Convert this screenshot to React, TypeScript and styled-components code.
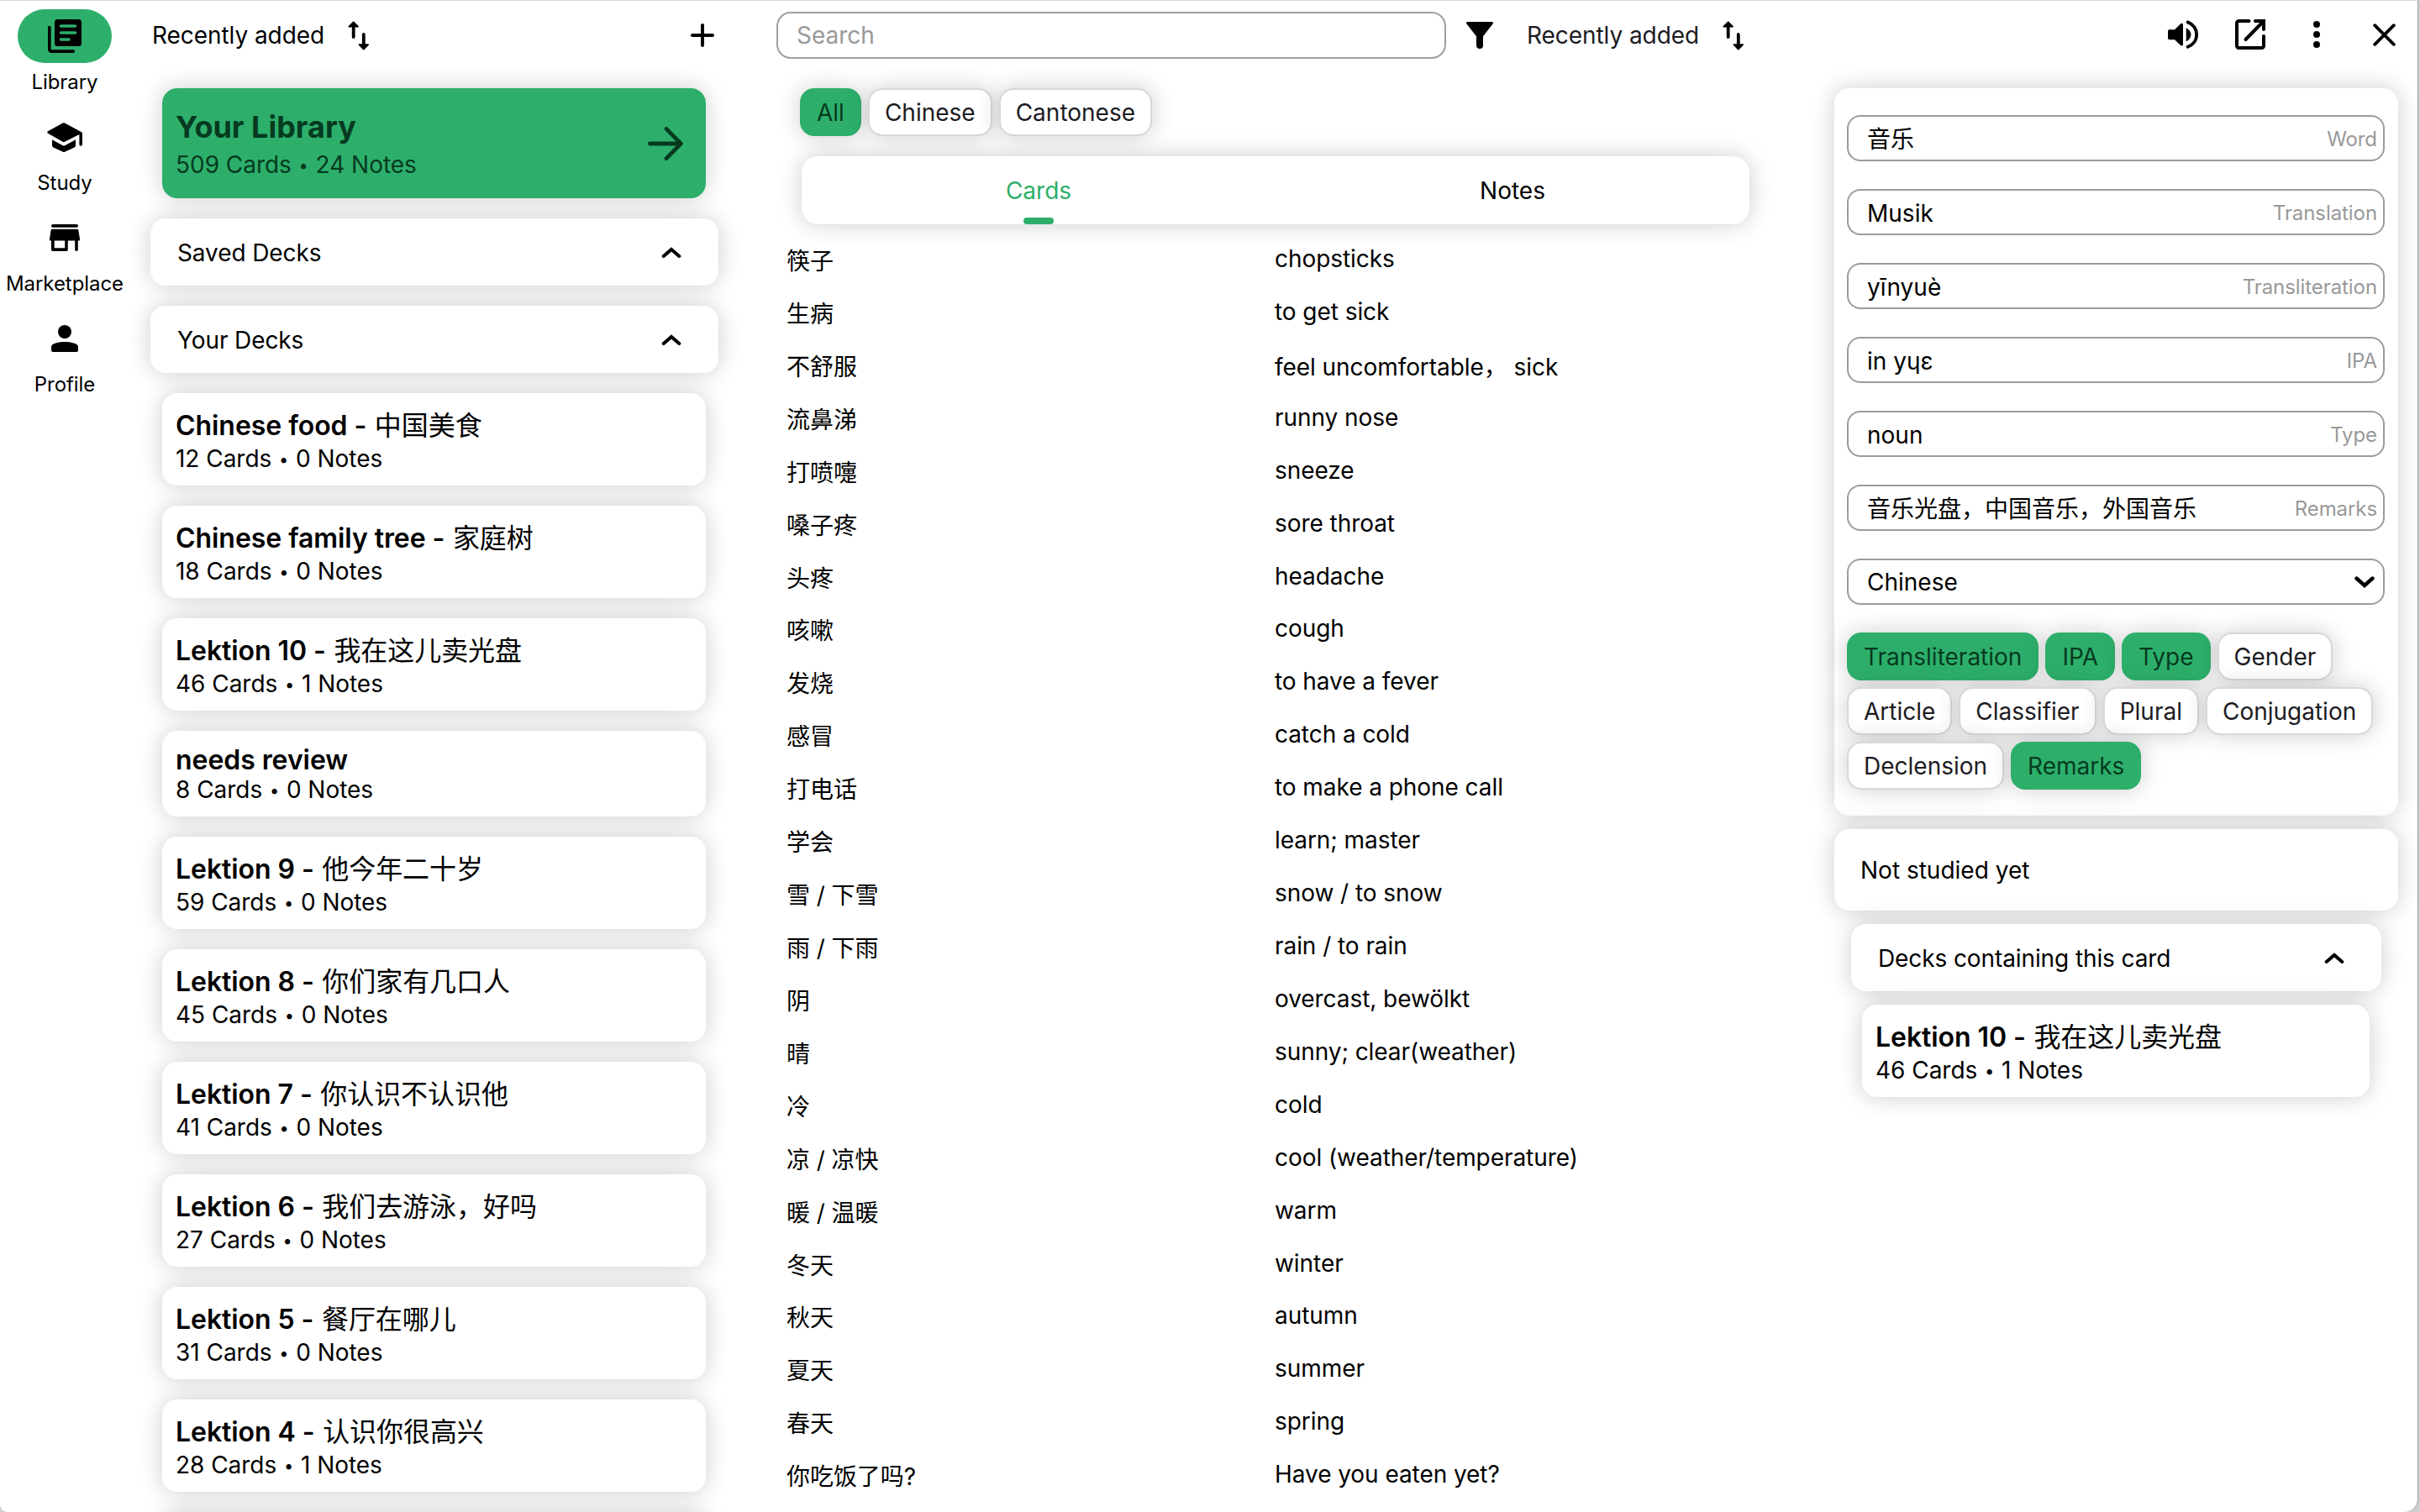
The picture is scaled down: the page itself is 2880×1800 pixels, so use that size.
import React from "react";
import styled, { createGlobalStyle, css } from "styled-components";

const green = "#2daf6b";
const deepGreen = "#063a20";
const softShadow = "0 0 28px rgba(0, 0, 0, 0.2)";

const GlobalStyle = createGlobalStyle`
  *, *::before, *::after { box-sizing: border-box; }
  html, body { margin: 0; padding: 0; overflow: hidden; }
  body {
    background: #cfcfcf;
    font-family: Inter, "Noto Sans CJK SC", sans-serif;
    font-size: 28px;
    line-height: 34px;
    color: #000;
  }
  svg { display: block; flex: none; }
`;

/* ---------- window and columns ---------- */

const Window = styled.div`
  display: grid;
  grid-template-columns: 155px 724px 1304px 1fr;
  width: 2878px;
  height: 1800px;
  overflow: hidden;
  background: #fff;
  border-top: 1px solid #d6d6dc;
  border-right: 1px solid #a2a2a2;
  border-radius: 0 0 16px 9px;
`;

const Nav = styled.nav`
  display: flex;
  flex-direction: column;
  align-items: center;
  padding: 10px 1px 0 0;
`;

const NavItem = styled.a`
  display: flex;
  flex-direction: column;
  align-items: center;
  gap: 8px;
  height: 120px;
  font-size: 24px;
  line-height: 29px;
  letter-spacing: -0.06px;
`;

const NavPill = styled.span<{ $active?: boolean }>`
  display: flex;
  align-items: center;
  justify-content: center;
  width: 112px;
  height: 64px;
  border-radius: 32px;
  background: ${(p) => (p.$active ? green : "transparent")};
`;

const DeckColumn = styled.section`
  display: flex;
  flex-direction: column;
  gap: 24px;
  min-height: 0;
  padding: 0 24px;
`;

const MainColumn = styled.section`
  display: flex;
  flex-direction: column;
  min-height: 0;
  padding-left: 45px;
`;

const DetailColumn = styled.section`
  display: flex;
  flex-direction: column;
  gap: 16px;
  min-height: 0;
  padding-right: 23px;
`;

/* ---------- toolbars ---------- */

const Toolbar = styled.header`
  display: flex;
  align-items: center;
  flex: none;
  height: 80px;
`;

const SortButton = styled.div<{ $tone?: string }>`
  display: flex;
  align-items: center;
  gap: 28px;
  letter-spacing: -0.06px;
  color: ${(p) => p.$tone ?? "#000"};
  svg { color: #000; }
`;

const DeckToolbar = styled(Toolbar)`
  justify-content: space-between;
  padding: 2px 5px 0 2px;
`;

const MainToolbar = styled(Toolbar)`
  height: 82px;
`;

const SearchBox = styled.div`
  display: flex;
  align-items: center;
  width: 797px;
  height: 56px;
  margin-right: 24px;
  padding-left: 22px;
  border: 2px solid #9f9f9f;
  border-radius: 17px;
  color: #999;
`;

const FilterSlot = styled.span`
  margin-right: 40px;
`;

const DetailToolbar = styled(Toolbar)`
  justify-content: flex-end;
  height: 88px;
  padding: 0 3px 8px 0;
`;

const IconSlot = styled.span<{ $gap: number }>`
  display: flex;
  margin-left: ${(p) => p.$gap}px;
`;

/* ---------- decks ---------- */

const card = css`
  background: #fff;
  border-radius: 18px;
  box-shadow: ${softShadow};
`;

const LibraryCard = styled.div`
  display: flex;
  align-items: center;
  justify-content: space-between;
  flex: none;
  height: 131px;
  margin: 0 15px 0 14px;
  padding: 0 27px 0 16px;
  border-radius: 18px;
  box-shadow: ${softShadow};
  background: ${green};
  color: ${deepGreen};
`;

const LibraryText = styled.div`
  display: flex;
  flex-direction: column;
  gap: 6px;
`;

const LibraryTitle = styled.h1`
  margin: 0;
  font-size: 36px;
  font-weight: 650;
  line-height: 44px;
`;

const Meta = styled.p`
  margin: 0;
  letter-spacing: -0.03px;
  white-space: nowrap;
`;

const Bullet = styled.span`
  display: inline-block;
  width: 13px;
  font-size: 20px;
  line-height: 20px;
  text-align: center;
  vertical-align: 2px;
`;

const SectionBar = styled.div<{ $inset?: number }>`
  ${card}
  display: flex;
  align-items: center;
  justify-content: space-between;
  flex: none;
  height: 80px;
  margin: 0 ${(p) => p.$inset ?? 0}px;
  padding: 1px 44px 0 32px;
  letter-spacing: -0.1px;
`;

const DeckItem = styled.article<{ $inset: number }>`
  ${card}
  flex: none;
  margin: 0 ${(p) => p.$inset + 1}px 0 ${(p) => p.$inset}px;
  padding: 16px 16px 15px;
`;

const DeckTitle = styled.h2<{ $tall?: boolean }>`
  margin: 0;
  height: ${(p) => (p.$tall ? 45 : 37)}px;
  font-size: 32px;
  font-weight: 600;
  line-height: ${(p) => (p.$tall ? 45 : 37)}px;
  letter-spacing: -0.06px;
  white-space: nowrap;
`;

const Hanzi = styled.span`
  margin-left: 1.5px;
  font-weight: 400;
`;

/* ---------- chips and tabs ---------- */

const ChipRow = styled.div<{ $left?: number }>`
  display: flex;
  flex-wrap: wrap;
  gap: 8px;
  padding-left: ${(p) => p.$left ?? 0}px;
`;

const Chip = styled.button<{ $on?: boolean }>`
  height: 57px;
  padding: 0.5px 18px 0;
  border: 2px solid ${(p) => (p.$on ? green : "#dad7d8")};
  border-radius: 17px;
  background: ${(p) => (p.$on ? green : "#fff")};
  box-shadow: ${softShadow};
  color: ${(p) => (p.$on ? deepGreen : "#1c1b1f")};
  font: inherit;
  line-height: 34px;
  white-space: nowrap;
`;

const FilterChips = styled.div`
  margin-top: 22px;
`;

const Tabs = styled.div`
  display: grid;
  grid-template-columns: 1fr 1fr;
  flex: none;
  width: 1128px;
  height: 81px;
  margin: 24px 0 0 30px;
  border-radius: 20px;
  background: #fff;
  box-shadow: ${softShadow};
`;

const Tab = styled.div<{ $active?: boolean }>`
  display: flex;
  flex-direction: column;
  align-items: center;
  justify-content: space-between;
  padding-top: 24px;
  color: ${(p) => (p.$active ? green : "#000")};
`;

const TabMark = styled.span`
  width: 36px;
  height: 8px;
  border-radius: 4px;
  background: ${green};
`;

/* ---------- word list ---------- */

const WordList = styled.ul`
  display: flex;
  flex-direction: column;
  margin: 24px 0 0;
  padding: 0 0 0 12px;
  list-style: none;
`;

const WordRow = styled.li`
  display: grid;
  grid-template-columns: 581px 1fr;
  height: 62.93px;
`;

const Cell = styled.span<{ $lowered?: boolean }>`
  padding-top: ${(p) => (p.$lowered ? 3 : 0)}px;
  line-height: 34px;
  letter-spacing: -0.06px;
  white-space: pre;
`;

/* ---------- card details ---------- */

const DetailCard = styled.div`
  ${card}
  display: flex;
  flex-direction: column;
  gap: 33px;
  flex: none;
  height: 866px;
  padding: 32px 16px 0 15px;
`;

const Field = styled.div`
  display: flex;
  align-items: center;
  justify-content: space-between;
  flex: none;
  height: 55px;
  padding: 2px 7px 0 22px;
  border: 2px solid #9c9c9c;
  border-radius: 16px;
`;

const FieldLabel = styled.span`
  color: #999;
  font-size: 24px;
  letter-spacing: -0.08px;
`;

const SelectField = styled(Field)`
  padding: 1px 10px 0 22px;
`;

const StatusCard = styled.div`
  ${card}
  display: flex;
  align-items: center;
  flex: none;
  height: 97px;
  padding: 1px 0 0 31px;
`;

/* ---------- icons ---------- */

const LibraryIcon = () => (
  <svg width="40" height="40" viewBox="0 0 40 40" fill="none">
    <rect x="8" y="0" width="32" height="32" rx="3.6" fill="#000" />
    <path d="M15.5 8H32.5M15.5 16H32.5M15.5 24H25" stroke={green} strokeWidth="3.6" strokeLinecap="round" />
    <path d="M1.8 9.5V35.7a2.4 2.4 0 0 0 2.4 2.4H30.3" stroke="#000" strokeWidth="3.6" strokeLinecap="round" />
  </svg>
);

const StudyIcon = () => (
  <svg width="42" height="35" viewBox="0 0 42 35">
    <path d="M18.7.5a2.6 2.6 0 0 1 2.4 0L41 11.2a1.8 1.8 0 0 1 1 1.6V26a1.8 1.8 0 0 1-3.6 0V14L21.1 22.8a2.6 2.6 0 0 1-2.4 0L1 12.8a1.4 1.4 0 0 1 0-2.5z" />
    <path d="M6 20.3l12.8 6.9a2.6 2.6 0 0 0 2.4 0l12.8-6.9v6.9a2.6 2.6 0 0 1-1.4 2.3L21.2 34.7a2.6 2.6 0 0 1-2.4 0L7.4 29.5A2.6 2.6 0 0 1 6 27.2z" />
  </svg>
);

const StoreIcon = () => (
  <svg width="36" height="32" viewBox="0 0 36 32">
    <rect x="2" y="0" width="32" height="3.8" rx="1.8" />
    <path d="M3.4 5.8H32.6a1.8 1.8 0 0 1 1.8 1.4L36 17.4a1.8 1.8 0 0 1-1.8 2.2H33.8V30.2a1.8 1.8 0 0 1-3.6 0V19.6H21.8V30.2a1.8 1.8 0 0 1-1.8 1.8H3.8A1.8 1.8 0 0 1 2 30.2V19.6H1.8A1.8 1.8 0 0 1 0 17.4L1.6 7.2A1.8 1.8 0 0 1 3.4 5.8zM5.7 19.6V28.3H18.2V19.6z" fillRule="evenodd" />
  </svg>
);

const ProfileIcon = () => (
  <svg width="32" height="32" viewBox="0 0 32 32">
    <circle cx="16" cy="8" r="8" />
    <path d="M0 26.4C0 24.3 1.2 23 3 22.2 7 20.6 11.4 20 16 20s9 .6 13 2.2c1.8.8 3 2.1 3 4.2V30a2 2 0 0 1-2 2H2a2 2 0 0 1-2-2z" />
  </svg>
);

const SortIcon = () => (
  <svg width="26" height="35" viewBox="0 0 26 35" fill="#000" stroke="#000" strokeLinecap="round" strokeLinejoin="round">
    <path d="M6.7 1.3L12 6.7H1.4z" strokeWidth="1.8" />
    <path d="M6.7 6V19M18.8 16V29" strokeWidth="3.8" />
    <path d="M18.8 33.5L24.1 28.1H13.5z" strokeWidth="1.8" />
  </svg>
);

const PlusIcon = () => (
  <svg width="28" height="28" viewBox="0 0 28 28" stroke="#000" strokeWidth="4" strokeLinecap="round">
    <path d="M14 2V26M2 14H26" />
  </svg>
);

const ArrowIcon = () => (
  <svg width="42" height="40" viewBox="0 0 42 40" fill="none" stroke={deepGreen} strokeWidth="4.8" strokeLinecap="round" strokeLinejoin="round">
    <path d="M2.4 20H38.5M22 2.4L39.3 20L22 37.6" />
  </svg>
);

const ChevronIcon = ({ down = false }: { down?: boolean }) => (
  <svg width="24" height="14" viewBox="0 0 24 14" fill="none" stroke="#000" strokeWidth={down ? 4.4 : 4} strokeLinecap="round" strokeLinejoin="miter">
    <path d={down ? "M2.5 2.5L12 11L21.5 2.5" : "M2.7 11L12 3L21.3 11"} />
  </svg>
);

const FilterIcon = () => (
  <svg width="32" height="32" viewBox="0 0 32 32">
    <path d="M1.4 0H30.6a1.4 1.4 0 0 1 1.1 2.3L20 17.3V28a4 4 0 0 1-8 0V17.3L.3 2.3A1.4 1.4 0 0 1 1.4 0z" />
  </svg>
);

const VolumeIcon = () => (
  <svg width="36" height="34" viewBox="0 0 36 34">
    <path d="M1.8 11.2H8L15.1 4.3C16.2 3.2 18 3.9 18 5.5V28.7C18 30.3 16.2 31 15.1 29.9L8 23.2H1.8A1.8 1.8 0 0 1 0 21.4V13A1.8 1.8 0 0 1 1.8 11.2z" />
    <path d="M21.7 9.2C25.2 10.8 27.4 13.7 27.4 17.2S25.2 23.7 21.7 25.3z" />
    <path d="M23.6 2.4C30 4.8 34.1 10.5 34.1 17.2S30 29.4 23.6 31.8" fill="none" stroke="#000" strokeWidth="3.8" strokeLinecap="round" />
  </svg>
);

const OpenIcon = () => (
  <svg width="36" height="36" viewBox="0 0 36 36" fill="none" stroke="#000" strokeWidth="4" strokeLinecap="round">
    <path d="M16.5 2H4.5A2.5 2.5 0 0 0 2 4.5V31.5A2.5 2.5 0 0 0 4.5 34H31.5A2.5 2.5 0 0 0 34 31.5V20" />
    <path d="M24 2H34V12M12.5 24L33 3" />
  </svg>
);

const MoreIcon = () => (
  <svg width="8" height="32" viewBox="0 0 8 32">
    <circle cx="4" cy="4" r="4" />
    <circle cx="4" cy="16" r="4" />
    <circle cx="4" cy="28" r="4" />
  </svg>
);

const CloseIcon = () => (
  <svg width="27" height="27" viewBox="0 0 27 27" stroke="#000" strokeWidth="3.8" strokeLinecap="round">
    <path d="M2.2 2.2L24.8 24.8M24.8 2.2L2.2 24.8" />
  </svg>
);

/* ---------- data ---------- */

const navItems = [
  { label: "Library", icon: <LibraryIcon />, active: true },
  { label: "Study", icon: <StudyIcon /> },
  { label: "Marketplace", icon: <StoreIcon /> },
  { label: "Profile", icon: <ProfileIcon /> },
];

type DeckData = { name: string; hanzi?: string; cards: number; notes: number };

const decks: DeckData[] = [
  { name: "Chinese food - ", hanzi: "中国美食", cards: 12, notes: 0 },
  { name: "Chinese family tree - ", hanzi: "家庭树", cards: 18, notes: 0 },
  { name: "Lektion 10 - ", hanzi: "我在这儿卖光盘", cards: 46, notes: 1 },
  { name: "needs review", cards: 8, notes: 0 },
  { name: "Lektion 9 - ", hanzi: "他今年二十岁", cards: 59, notes: 0 },
  { name: "Lektion 8 - ", hanzi: "你们家有几口人", cards: 45, notes: 0 },
  { name: "Lektion 7 - ", hanzi: "你认识不认识他", cards: 41, notes: 0 },
  { name: "Lektion 6 - ", hanzi: "我们去游泳，好吗", cards: 27, notes: 0 },
  { name: "Lektion 5 - ", hanzi: "餐厅在哪儿", cards: 31, notes: 0 },
  { name: "Lektion 4 - ", hanzi: "认识你很高兴", cards: 28, notes: 1 },
];

const words: [string, string][] = [
  ["筷子", "chopsticks"],
  ["生病", "to get sick"],
  ["不舒服", "feel uncomfortable， sick"],
  ["流鼻涕", "runny nose"],
  ["打喷嚏", "sneeze"],
  ["嗓子疼", "sore throat"],
  ["头疼", "headache"],
  ["咳嗽", "cough"],
  ["发烧", "to have a fever"],
  ["感冒", "catch a cold"],
  ["打电话", "to make a phone call"],
  ["学会", "learn; master"],
  ["雪 / 下雪", "snow / to snow"],
  ["雨 / 下雨", "rain / to rain"],
  ["阴", "overcast, bewölkt"],
  ["晴", "sunny; clear(weather)"],
  ["冷", "cold"],
  ["凉 / 凉快", "cool (weather/temperature)"],
  ["暖 / 温暖", "warm"],
  ["冬天", "winter"],
  ["秋天", "autumn"],
  ["夏天", "summer"],
  ["春天", "spring"],
  ["你吃饭了吗?", "Have you eaten yet?"],
];

const fields: [string, string][] = [
  ["音乐", "Word"],
  ["Musik", "Translation"],
  ["yīnyuè", "Transliteration"],
  ["in yɥɛ", "IPA"],
  ["noun", "Type"],
  ["音乐光盘，中国音乐，外国音乐", "Remarks"],
];

const attributes: [string, boolean][] = [
  ["Transliteration", true],
  ["IPA", true],
  ["Type", true],
  ["Gender", false],
  ["Article", false],
  ["Classifier", false],
  ["Plural", false],
  ["Conjugation", false],
  ["Declension", false],
  ["Remarks", true],
];

const Counts = ({ cards, notes }: { cards: number; notes: number }) => (
  <Meta>
    {cards} Cards <Bullet>•</Bullet> {notes} Notes
  </Meta>
);

const Deck = ({ deck, inset }: { deck: DeckData; inset: number }) => (
  <DeckItem $inset={inset}>
    <DeckTitle $tall={!!deck.hanzi}>
      {deck.name}
      {deck.hanzi && <Hanzi>{deck.hanzi}</Hanzi>}
    </DeckTitle>
    <Counts cards={deck.cards} notes={deck.notes} />
  </DeckItem>
);

const UpcomingDeck = styled.div`
  ${card}
  flex: none;
  height: 110px;
  margin: 0 15px 0 14px;
`;

export default function App() {
  return (
    <>
      <GlobalStyle />
      <Window>
        <Nav>
          {navItems.map((n) => (
            <NavItem key={n.label}>
              <NavPill $active={n.active}>{n.icon}</NavPill>
              {n.label}
            </NavItem>
          ))}
        </Nav>

        <DeckColumn>
          <DeckToolbar>
            <SortButton>
              Recently added
              <SortIcon />
            </SortButton>
            <PlusIcon />
          </DeckToolbar>
          <LibraryCard>
            <LibraryText>
              <LibraryTitle>Your Library</LibraryTitle>
              <Counts cards={509} notes={24} />
            </LibraryText>
            <ArrowIcon />
          </LibraryCard>
          <SectionBar>
            Saved Decks
            <ChevronIcon />
          </SectionBar>
          <SectionBar>
            Your Decks
            <ChevronIcon />
          </SectionBar>
          {decks.map((d) => (
            <Deck key={d.name} deck={d} inset={14} />
          ))}
          <UpcomingDeck />
        </DeckColumn>

        <MainColumn>
          <MainToolbar>
            <SearchBox>Search</SearchBox>
            <FilterSlot>
              <FilterIcon />
            </FilterSlot>
            <SortButton $tone="#1c1b1f">
              Recently added
              <SortIcon />
            </SortButton>
          </MainToolbar>
          <FilterChips>
            <ChipRow $left={28}>
              <Chip $on>All</Chip>
              <Chip>Chinese</Chip>
              <Chip>Cantonese</Chip>
            </ChipRow>
          </FilterChips>
          <Tabs>
            <Tab $active>
              Cards
              <TabMark />
            </Tab>
            <Tab>Notes</Tab>
          </Tabs>
          <WordList>
            {words.map(([hanzi, meaning]) => (
              <WordRow key={hanzi}>
                <Cell $lowered>{hanzi}</Cell>
                <Cell $lowered={meaning.includes("，")}>{meaning}</Cell>
              </WordRow>
            ))}
          </WordList>
        </MainColumn>

        <DetailColumn>
          <DetailToolbar>
            <VolumeIcon />
            <IconSlot $gap={44}>
              <OpenIcon />
            </IconSlot>
            <IconSlot $gap={57.5}>
              <MoreIcon />
            </IconSlot>
            <IconSlot $gap={63}>
              <CloseIcon />
            </IconSlot>
          </DetailToolbar>
          <DetailCard>
            {fields.map(([value, label]) => (
              <Field key={label}>
                {value}
                <FieldLabel>{label}</FieldLabel>
              </Field>
            ))}
            <SelectField>
              Chinese
              <ChevronIcon down />
            </SelectField>
            <ChipRow>
              {attributes.map(([name, on]) => (
                <Chip key={name} $on={on}>
                  {name}
                </Chip>
              ))}
            </ChipRow>
          </DetailCard>
          <StatusCard>Not studied yet</StatusCard>
          <SectionBar $inset={20}>
            Decks containing this card
            <ChevronIcon />
          </SectionBar>
          <Deck deck={decks[2]} inset={33} />
        </DetailColumn>
      </Window>
    </>
  );
}
